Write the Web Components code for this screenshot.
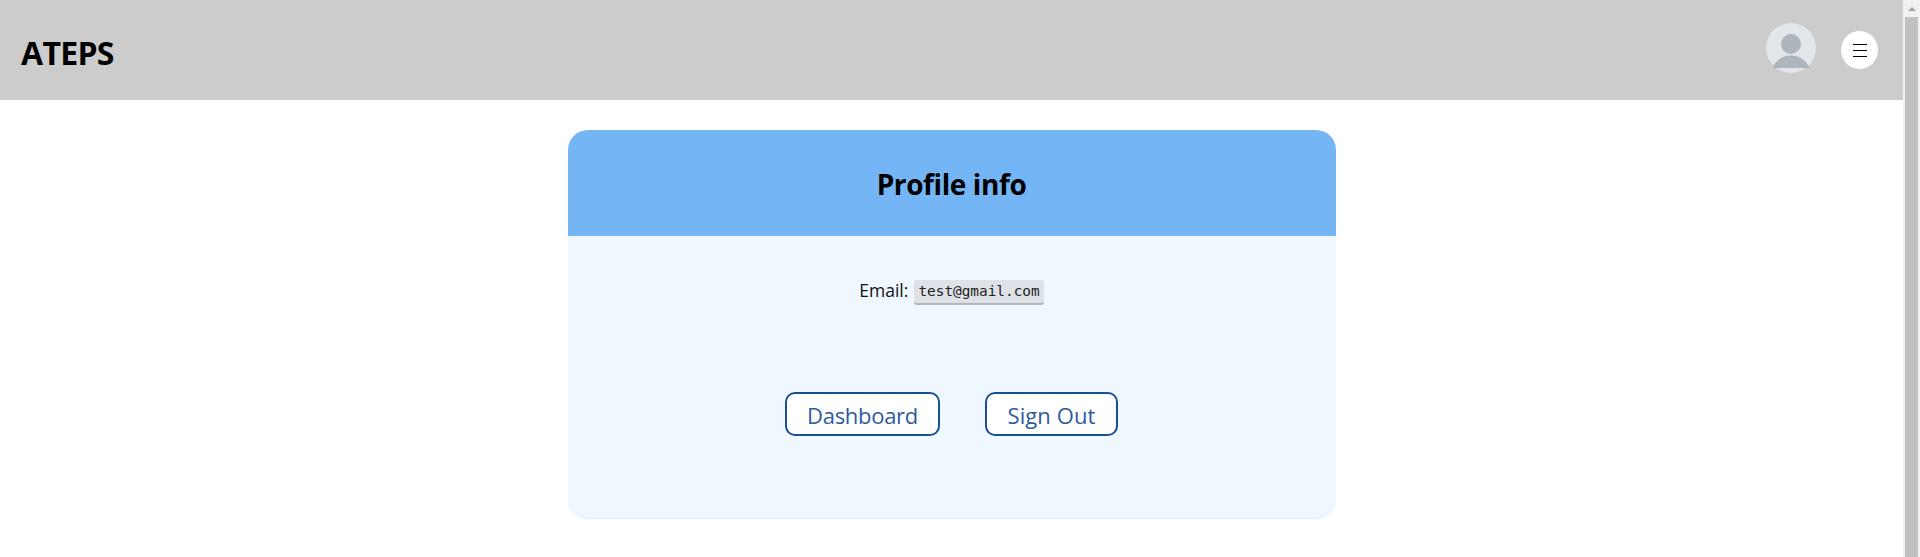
<!DOCTYPE html>
<html>
<head>
<meta charset="utf-8">
<title>ATEPS</title>
<style>
  html, body { margin: 0; height: 100%; overflow: hidden; }
  body { display: flex; font-family: "Open Sans", "Noto Sans", sans-serif; color: #000; background: #fff; }
</style>
</head>
<body>
  <app-page>
    <app-header slot="header" title="ATEPS"></app-header>
    <profile-card title="Profile info" email="test@gmail.com">
      <action-button style="width:155px">Dashboard</action-button>
      <action-button style="width:133px;letter-spacing:0.1px">Sign Out</action-button>
    </profile-card>
  </app-page>
  <page-scrollbar></page-scrollbar>

<script>
class AppPage extends HTMLElement {
  constructor() {
    super();
    this.attachShadow({ mode: 'open' }).innerHTML = `
    <style>
      :host { display: block; flex: 1; min-width: 0; }
      main { display: flex; justify-content: center; padding-top: 30px; }
    </style>
    <slot name="header"></slot>
    <main><slot></slot></main>
    `;
  }
}

class AppHeader extends HTMLElement {
  constructor() {
    super();
    this.attachShadow({ mode: 'open' }).innerHTML = `
    <style>
      :host { display: flex; align-items: center; height: 100px; background: #ccc; padding: 0 25px 0 21px; }
      h1 { flex: 1; margin: 5px 0 0; font-size: 32px; line-height: 44px; font-weight: 700; letter-spacing: -0.7px; }
      user-avatar { margin-bottom: 4px; }
      menu-button { margin-left: 25px; }
    </style>
    <h1>${this.getAttribute('title')}</h1>
    <user-avatar></user-avatar>
    <menu-button></menu-button>
    `;
  }
}

class UserAvatar extends HTMLElement {
  constructor() {
    super();
    this.attachShadow({ mode: 'open' }).innerHTML = `
    <style>
      :host { display: block; width: 50px; height: 50px; }
      svg { display: block; }
    </style>
    <svg width="50" height="50" viewBox="0 0 50 50">
      <circle cx="25" cy="25" r="25" fill="#e3e6e9"/>
      <circle cx="25" cy="21" r="10" fill="#adb5bd"/>
      <path d="M6.5 45C9 38 16 32.5 25 32.5S41 38 43.5 45z" fill="#adb5bd"/>
    </svg>
    `;
  }
}

class MenuButton extends HTMLElement {
  constructor() {
    super();
    this.attachShadow({ mode: 'open' }).innerHTML = `
    <style>
      :host { display: flex; flex-direction: column; justify-content: center; gap: 5px; align-items: center;
              width: 37px; height: 38px; border-radius: 50%; background: #fff; }
      i { display: block; width: 14px; height: 1px; background: #000; }
    </style>
    <i></i><i></i><i></i>
    `;
  }
}

class ProfileCard extends HTMLElement {
  constructor() {
    super();
    this.attachShadow({ mode: 'open' }).innerHTML = `
    <style>
      :host { display: block; width: 768px; height: 389px; box-sizing: border-box; border-radius: 20px; overflow: hidden;
              background: #eff7ff; border-bottom: 1px solid #e4f0fb; }
      header { height: 106px; display: flex; align-items: center; justify-content: center; background: #74b6f5; padding-top: 2px; box-sizing: border-box; }
      h2 { margin: 0; font-size: 28px; font-weight: 700; letter-spacing: -0.4px; }
      p { margin: 42px 0 0; display: flex; justify-content: center; align-items: center; gap: 6px; font-size: 17.5px; height: 28px; color: #111; }
      span { margin-bottom: 4px; }
      code { font: 14.4px "DejaVu Sans Mono", monospace; padding: 1px 4px; height: 21px; line-height: 21px; box-sizing: content-box;
             background: #dee2e6; border-bottom: 2px solid #adb5bd; border-radius: 3px; color: #222; }
      .actions { display: flex; justify-content: center; gap: 45px; margin-top: 86px; }
    </style>
    <header><h2>${this.getAttribute('title')}</h2></header>
    <p><span>Email:</span> <code>${this.getAttribute('email')}</code></p>
    <div class="actions"><slot></slot></div>
    `;
  }
}

class ActionButton extends HTMLElement {
  constructor() {
    super();
    this.attachShadow({ mode: 'open' }).innerHTML = `
    <style>
      :host { display: inline-flex; align-items: center; justify-content: center; height: 44px; box-sizing: border-box;
              background: #fff; border: 2px solid #1c4e98; border-radius: 10px; color: #305a9f; font-size: 22px; letter-spacing: -0.3px; }
      div { padding-top: 2px; }
    </style>
    <div><slot></slot></div>
    `;
  }
}

class PageScrollbar extends HTMLElement {
  constructor() {
    super();
    this.attachShadow({ mode: 'open' }).innerHTML = `
    <style>
      :host { display: flex; flex-direction: column; flex: none; width: 17px; height: 100%; background: #f1f1f1; }
      .arrow { height: 17px; display: flex; align-items: center; justify-content: center; }
      .arrow i { width: 0; height: 0; border-left: 4px solid transparent; border-right: 4px solid transparent; border-bottom: 4px solid #a3a3a3; }
      .thumb { flex: 1; margin: 0 2px; background: #c1c1c1; }
    </style>
    <div class="arrow"><i></i></div>
    <div class="thumb"></div>
    `;
  }
}

customElements.define('app-page', AppPage);
customElements.define('app-header', AppHeader);
customElements.define('user-avatar', UserAvatar);
customElements.define('menu-button', MenuButton);
customElements.define('profile-card', ProfileCard);
customElements.define('action-button', ActionButton);
customElements.define('page-scrollbar', PageScrollbar);
</script>
</body>
</html>
